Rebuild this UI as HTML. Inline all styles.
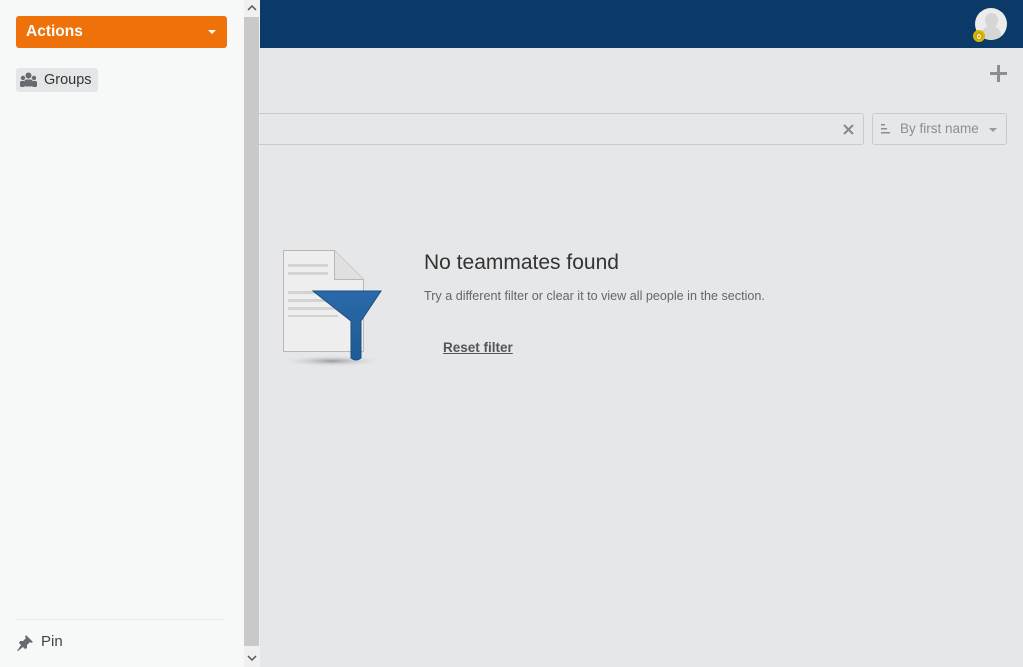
<!DOCTYPE html>
<html><head><meta charset="utf-8"><style>
*{margin:0;padding:0;box-sizing:border-box}
body{width:1023px;height:667px;overflow:hidden;position:relative;background:#e6e7e9;font-family:"Liberation Sans",sans-serif}
.hdr{position:absolute;left:260px;top:0;width:763px;height:48px;background:#0c3a68}
.side{position:absolute;left:0;top:0;width:244px;height:667px;background:#f7f8f8}
.sb{position:absolute;left:244px;top:0;width:16px;height:667px;background:#f0f0f0}
.thumb{position:absolute;left:244px;top:17px;width:15px;height:629px;background:#c9c9c9}
.act{position:absolute;left:16px;top:16px;width:211px;height:32px;background:#ef7109;border-radius:3px;color:#fff;font-weight:bold;font-size:15.5px;line-height:32px;padding-left:10px}
.act:after{content:"";position:absolute;right:11px;top:14px;border:4px solid transparent;border-top-color:#fff;border-bottom:0}
.grp{position:absolute;left:16px;top:68px;width:82px;height:24px;background:#e4e6e8;border-radius:3px;font-size:14.5px;color:#333;line-height:24px;padding-left:28px}
.line{position:absolute;left:16px;top:619px;width:208px;height:1px;background:#e8e9ea}
.pin{position:absolute;left:41px;top:633px;font-size:15px;color:#444}
.search{position:absolute;left:259px;top:113px;width:605px;height:32px;border:1px solid #c8cacd;border-left:none;border-radius:0 3px 3px 0}
.sort{position:absolute;left:872px;top:113px;width:135px;height:32px;border:1px solid #c8cacd;border-radius:3px;font-size:13.5px;color:#8b8f93;line-height:30px;padding-left:27px}
h1{position:absolute;left:424px;top:251px;font-size:21px;font-weight:normal;color:#333}
.p{position:absolute;left:424px;top:289px;font-size:12.6px;color:#666}
.r{position:absolute;left:443px;top:340px;font-size:13.5px;font-weight:bold;color:#555;text-decoration:underline}
</style></head><body>
<div class="hdr"></div>
<div style="position:absolute;left:975px;top:8px;width:32px;height:32px;border-radius:50%;background:#ececec;overflow:hidden"><div style="position:absolute;left:10px;top:5px;width:13px;height:15px;border-radius:50%;background:#d6d6d6"></div><div style="position:absolute;left:6px;top:18px;width:20px;height:18px;border-radius:50%;background:#d6d6d6"></div></div>
<div style="position:absolute;left:973px;top:30px;width:12px;height:12px;border-radius:50%;background:#c9a400;border:2px solid #d9b800"><div style="margin:2px auto;width:4px;height:5px;border:1px solid #fff;border-radius:50%"></div></div>
<div style="position:absolute;left:990px;top:72px;width:17px;height:3px;background:#8b8f93"></div>
<div style="position:absolute;left:997px;top:65px;width:3px;height:17px;background:#8b8f93"></div>
<div class="side"></div>
<div class="sb"></div><div class="thumb"></div>
<svg style="position:absolute;left:247px;top:5px" width="10" height="7"><path d="M1 5l4-4 4 4" fill="none" stroke="#555" stroke-width="1.5"/></svg>
<svg style="position:absolute;left:247px;top:655px" width="10" height="7"><path d="M1 1l4 4 4-4" fill="none" stroke="#555" stroke-width="1.5"/></svg>
<div class="act">Actions</div>
<div class="grp"><svg style="position:absolute;left:4px;top:4px" width="17" height="15" viewBox="0 0 17 15"><g fill="#666b70"><circle cx="8.5" cy="3.5" r="3"/><circle cx="3" cy="6" r="2.2"/><circle cx="14" cy="6" r="2.2"/><rect x="4.5" y="7.5" width="8" height="7" rx="2"/><rect x="0" y="9" width="5" height="6" rx="1.5"/><rect x="12" y="9" width="5" height="6" rx="1.5"/></g></svg>Groups</div>
<div class="line"></div>
<svg style="position:absolute;left:16px;top:634px" width="18" height="18" viewBox="0 0 18 18"><path d="M10 1l7 7-2 1-1-1-3 3 0 3-2 1-6-6 1-2 3 0 3-3-1-1z M5 11l-4 6 1 0 5-4z" fill="#666b70"/></svg>
<div class="pin">Pin</div>
<div class="search"><svg style="position:absolute;right:9px;top:10px" width="11" height="11"><path d="M1 1l9 9M10 1l-9 9" stroke="#888" stroke-width="2"/></svg></div>
<div class="sort"><svg style="position:absolute;left:8px;top:10px" width="10" height="10"><rect x="0" y="0" width="4" height="1.5" fill="#8b8f93"/><rect x="0" y="4" width="6" height="1.5" fill="#8b8f93"/><rect x="0" y="8" width="9" height="1.5" fill="#8b8f93"/></svg>By first name<span style="position:absolute;right:9px;top:14px;border:4px solid transparent;border-top-color:#999;border-bottom:0"></span></div>
<svg style="position:absolute;left:276px;top:248px" width="112" height="122" viewBox="0 0 112 122">
<defs><radialGradient id="s"><stop offset="0" stop-color="#999"/><stop offset="1" stop-color="#e6e7e9" stop-opacity="0"/></radialGradient><linearGradient id="f" x1="0" x2="0" y1="0" y2="1"><stop offset="0" stop-color="#2a6aaa"/><stop offset="1" stop-color="#1e5a94"/></linearGradient></defs>
<ellipse cx="56" cy="113" rx="52" ry="6" fill="url(#s)"/>
<path d="M7.5 2.5h51l29 29v72h-80z" fill="#eeeeee" stroke="#b8b8b8"/>
<path d="M58.5 2.5v29h29" fill="#e0e0e0" stroke="#b8b8b8"/>
<g fill="#d3d3d3"><rect x="12" y="16" width="40" height="3"/><rect x="12" y="24" width="40" height="3"/><rect x="12" y="43" width="50" height="3"/><rect x="12" y="51" width="50" height="3"/><rect x="12" y="59" width="50" height="3"/><rect x="12" y="67" width="50" height="2"/></g>
<path d="M37 43h68l-20 30v37q-5 4-10 0v-37z" fill="url(#f)" stroke="#1b4f82"/>
</svg>
<h1>No teammates found</h1>
<div class="p">Try a different filter or clear it to view all people in the section.</div>
<div class="r">Reset filter</div>
</body></html>
